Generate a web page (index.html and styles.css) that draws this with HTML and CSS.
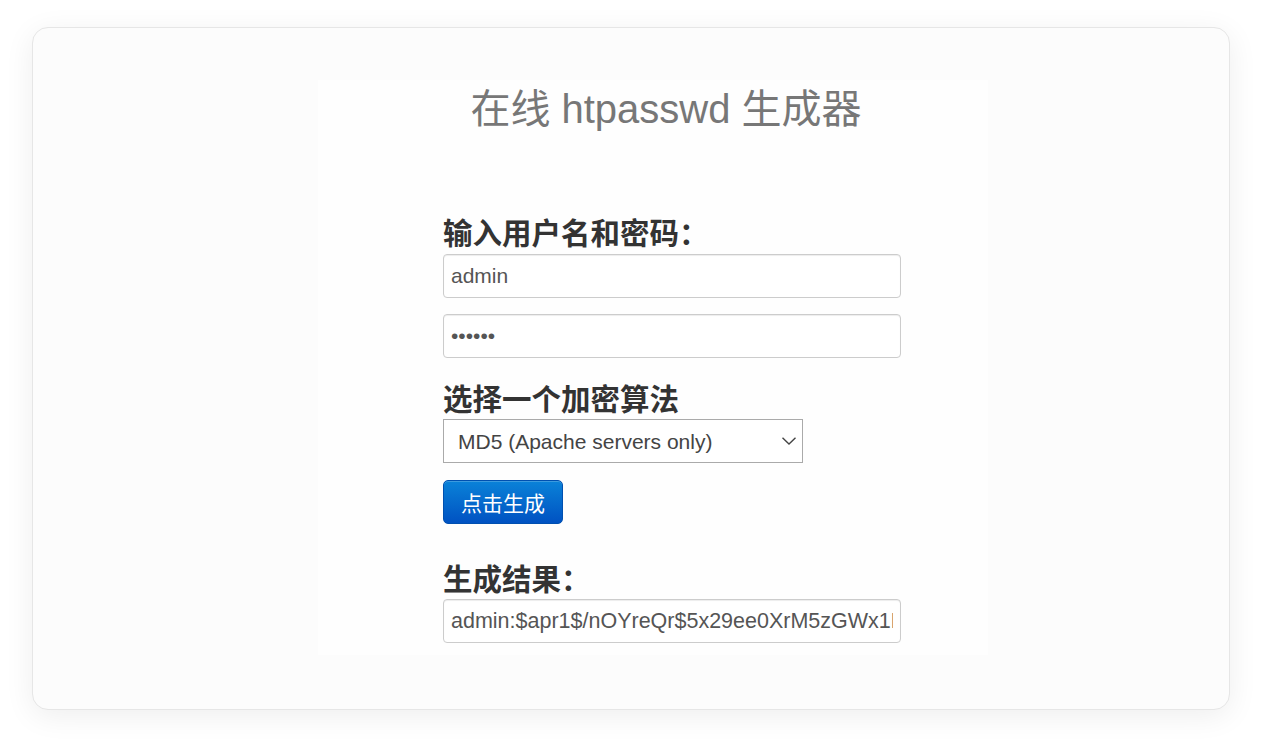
FILE: index.html
```html
<!DOCTYPE html>
<html lang="zh-CN">
<head>
<meta charset="utf-8">
<title>在线 htpasswd 生成器</title>
<link rel="stylesheet" href="styles.css">
</head>
<body>
<div class="page">
  <div class="card">
    <div class="panel">
      <h1 class="title">在线 htpasswd 生成器</h1>
      <form class="form">
        <label class="label first">输入用户名和密码：</label>
        <input class="field" type="text" value="admin">
        <input class="field gap" type="password" value="123456">
        <label class="label second">选择一个加密算法</label>
        <div class="select-wrap">
          <select class="select">
            <option>MD5 (Apache servers only)</option>
            <option>bcrypt</option>
            <option>SHA-1</option>
            <option>crypt</option>
          </select>
          <svg class="chevron" width="16" height="10" viewBox="0 0 16 10"><path d="M1.5 1.8 L8 8 L14.5 1.8" fill="none" stroke="#444" stroke-width="1.4"/></svg>
        </div>
        <button class="btn" type="button">点击生成</button>
        <label class="label third">生成结果：</label>
        <input class="field result" type="text" value="admin:$apr1$/nOYreQr$5x29ee0XrM5zGWx1FyIz0/">
      </form>
    </div>
  </div>
</div>
</body>
</html>
```
FILE: styles.css
```css
* { box-sizing: border-box; }
html, body { margin: 0; padding: 0; background: #ffffff; }
body {
  font-family: "Liberation Sans", "Noto Sans CJK SC", sans-serif;
}
.page {
  padding: 27px 32px 38px 32px;
}
.card {
  height: 683px;
  border: 1px solid #e6e6e6;
  border-radius: 16px;
  background: #fcfcfc;
  box-shadow: 0 6px 30px rgba(0, 0, 0, 0.07);
  padding-top: 52px;
}
.panel {
  width: 670px;
  height: 575px;
  margin-left: 285px;
  background: #fefefe;
  padding-top: 9px;
}
.title {
  margin: 0;
  padding-left: 26px;
  text-align: center;
  font-size: 40px;
  line-height: 40px;
  font-weight: normal;
  color: #777777;
  font-family: "Liberation Sans", "Noto Sans CJK SC", sans-serif;
}
.form {
  display: flex;
  flex-direction: column;
  align-items: flex-start;
  padding-left: 125px;
  margin: 0;
}
.label {
  display: block;
  font-size: 29.5px;
  line-height: 32px;
  font-weight: 700;
  color: #333333;
  font-family: "Noto Sans CJK SC", sans-serif;
}
.label.first { margin-top: 86px; }
.label.second { margin-top: 23px; }
.label.third { margin-top: 37px; }
.field {
  width: 458px;
  height: 44px;
  margin: 7px 0 0 0;
  padding: 0 7px;
  border: 1px solid #cccccc;
  border-radius: 4px;
  box-shadow: inset 0 1px 1px rgba(0, 0, 0, 0.075);
  background: #ffffff;
  font-family: "Liberation Sans", "Noto Sans CJK SC", sans-serif;
  font-size: 21px;
  color: #555555;
  outline: none;
}
.field.gap { margin-top: 16px; }
.field.result { margin-top: 6px; font-size: 21.5px; }
.select-wrap {
  position: relative;
  margin-top: 6px;
  width: 360px;
  height: 44px;
}
.select {
  -webkit-appearance: none;
  appearance: none;
  width: 360px;
  height: 44px;
  margin: 0;
  padding: 0 14px;
  border: 1px solid #aaaaaa;
  border-radius: 0;
  background: #ffffff;
  font-family: "Liberation Sans", "Noto Sans CJK SC", sans-serif;
  font-size: 21px;
  color: #444444;
  outline: none;
}
.chevron {
  position: absolute;
  right: 6px;
  top: 17px;
  pointer-events: none;
}
.btn {
  margin-top: 17px;
  width: 120px;
  height: 44px;
  padding: 0;
  border: 1px solid #0050b0;
  border-radius: 5px;
  background: linear-gradient(#0a82d8, #0052c2);
  box-shadow: inset 0 1px 0 rgba(255, 255, 255, 0.2);
  color: #ffffff;
  font-family: "Noto Sans CJK SC", sans-serif;
  font-size: 21px;
  line-height: 42px;
  cursor: pointer;
}
```
